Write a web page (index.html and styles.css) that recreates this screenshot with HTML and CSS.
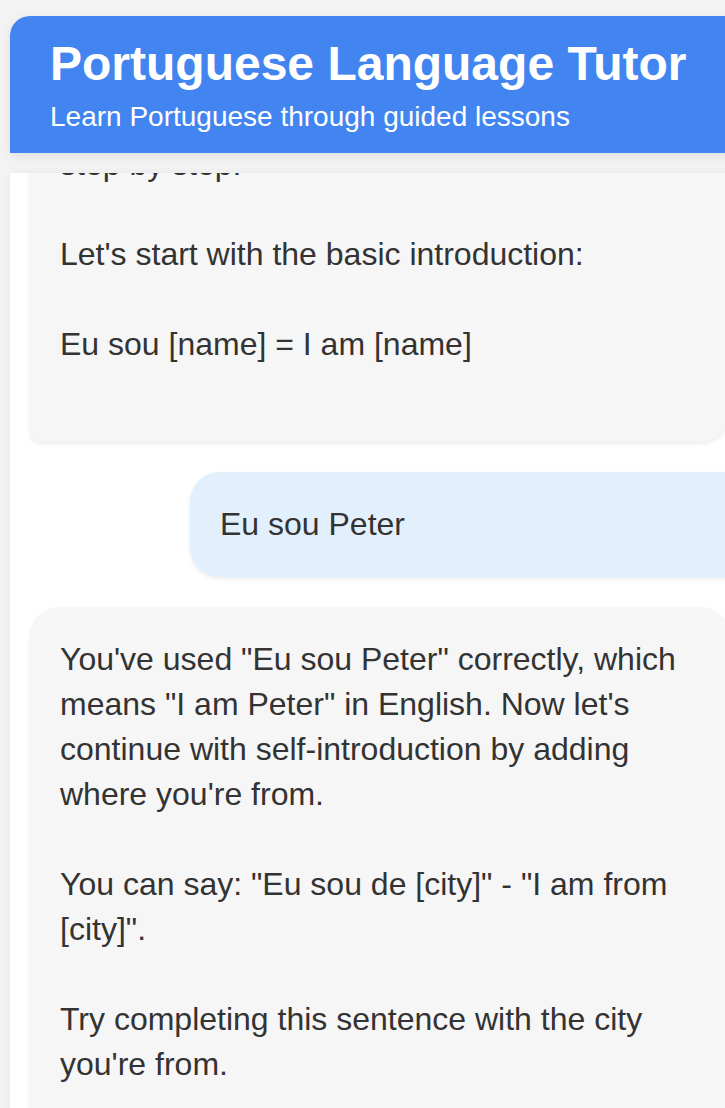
FILE: index.html
```html
<!DOCTYPE html>
<html lang="en">
<head>
<meta charset="utf-8">
<title>Portuguese Language Tutor</title>
<link rel="stylesheet" href="styles.css">
</head>
<body>
<div class="app">
  <header class="header">
    <h1 class="title">Portuguese Language Tutor</h1>
    <p class="subtitle">Learn Portuguese through guided lessons</p>
  </header>
  <main class="chat">
    <div class="msg assistant">step by step.

Let's start with the basic introduction:

Eu sou [name] = I am [name]

</div>
    <div class="msg user">Eu sou Peter</div>
    <div class="msg assistant">You've used "Eu sou Peter" correctly, which means "I am Peter" in English. Now let's continue with self-introduction by adding where you're from.

You can say: "Eu sou de [city]" - "I am from [city]".

Try completing this sentence with the city you're from.

</div>
  </main>
</div>
</body>
</html>
```

FILE: styles.css
```css
html, body {
  overflow: hidden;
}
body {
  margin: 0;
  padding: 16px 0 0 10px;
  background: #f3f3f3;
  font-family: "Liberation Sans", Arial, sans-serif;
  color: #333;
}
.app {
  width: 840px;
  display: flex;
  flex-direction: column;
  gap: 20px;
}
.header {
  background: #4285f0;
  color: #fff;
  padding: 20px 40px;
  border-radius: 20px 20px 0 0;
  box-shadow: 0 3px 12px rgba(0, 0, 0, 0.08);
}
.title {
  margin: 0 0 10px;
  font-size: 48px;
  font-weight: bold;
  line-height: normal;
}
.subtitle {
  margin: 0;
  font-size: 28px;
  line-height: normal;
}
/* chat log anchored to its bottom, older messages scroll off the top */
.chat {
  background: #fff;
  padding: 20px;
  height: 1009px;
  box-sizing: border-box;
  overflow: hidden;
  display: flex;
  flex-direction: column;
  justify-content: flex-end;
  gap: 30px;
  box-shadow: 0 0 10px rgba(0, 0, 0, 0.05);
}
.msg {
  flex: none;
  padding: 30px;
  border-radius: 30px;
  font-size: 32px;
  line-height: 45px;
  white-space: pre-wrap;
  box-shadow: 0 2px 4px rgba(0, 0, 0, 0.08);
}
.assistant {
  background: #f6f6f6;
  margin-right: 12.5%;
  border-bottom-left-radius: 10px;
}
.user {
  background: #e2f0fd;
  margin-left: 20%;
  border-bottom-right-radius: 10px;
}
```
